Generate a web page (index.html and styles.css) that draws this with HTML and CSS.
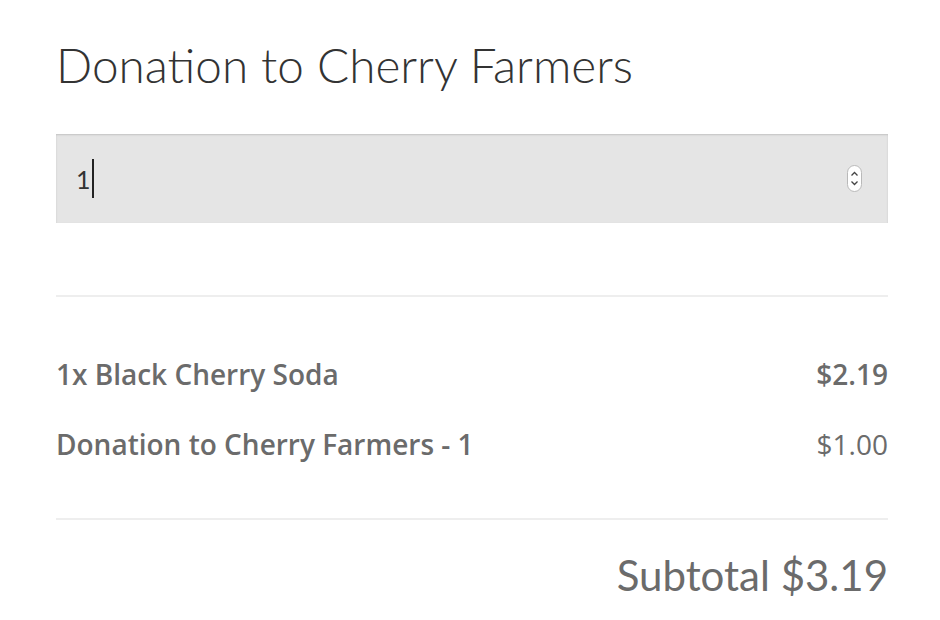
FILE: index.html
```html
<!DOCTYPE html>
<html lang="en">
<head>
  <meta charset="UTF-8" />
  <meta name="viewport" content="width=device-width, initial-scale=1.0" />
  <title>Donation to Cherry Farmers</title>
  <link rel="stylesheet" href="styles.css">
</head>
<body>

  <div id="doacao">
    <h1>Donation to Cherry Farmers</h1>

    <div class="campo-numero">
      <span class="valor">1</span><span class="cursor"></span>
      <span class="spinner">
        <svg width="15" height="27" viewBox="0 0 15 27">
          <rect x="0.5" y="0.5" width="14" height="26" rx="7" fill="#fff" stroke="#b9b9b9"/>
          <path d="M4.5 10.5 L7.5 7.5 L10.5 10.5" fill="none" stroke="#444" stroke-width="1.3"/>
          <path d="M4.5 16.5 L7.5 19.5 L10.5 16.5" fill="none" stroke="#444" stroke-width="1.3"/>
        </svg>
      </span>
    </div>

    <ul class="itens">
      <li><span class="nome">1x Black Cherry Soda</span><span class="preco forte">$2.19</span></li>
      <li><span class="nome">Donation to Cherry Farmers - 1</span><span class="preco">$1.00</span></li>
    </ul>

    <div class="subtotal">Subtotal $3.19</div>
  </div>

</body>
</html>
```

FILE: styles.css
```css
* { margin: 0; padding: 0; box-sizing: border-box; }

body {
  font-family: Lato, "Open Sans", sans-serif;
  background: #fff;
}

#doacao {
  width: 832px;
  margin-left: 56px;
  padding-top: 35px;
}

#doacao h1 {
  font-size: 47.7px;
  line-height: 60px;
  font-weight: 300;
  color: #333;
}

.campo-numero {
  margin-top: 39px;
  height: 89px;
  background-color: #e5e5e5;
  box-shadow: inset 0 1px 2px rgba(0, 0, 0, 0.15);
  display: flex;
  align-items: center;
  padding: 0 26px 0 20px;
}

.valor {
  font-size: 25px;
  color: #333;
}

.cursor {
  width: 2px;
  height: 39px;
  background-color: #222;
  margin-left: 1px;
}

.spinner {
  margin-left: auto;
  display: flex;
}

.itens {
  list-style: none;
  margin-top: 72px;
  border-top: 2px solid #eee;
  border-bottom: 2px solid #eee;
  padding: 42px 0 39px;
}

.itens li {
  display: flex;
  justify-content: space-between;
  font-family: "Open Sans", Lato, sans-serif;
  font-size: 28px;
  line-height: 70px;
  color: #6b6b6b;
}

.itens .nome { font-weight: 600; }
.itens .preco { font-weight: 400; }
.itens .preco.forte { font-weight: 600; }

.subtotal {
  margin-top: 25px;
  text-align: right;
  font-size: 42px;
  line-height: 60px;
  color: #6b6b6b;
}
```
